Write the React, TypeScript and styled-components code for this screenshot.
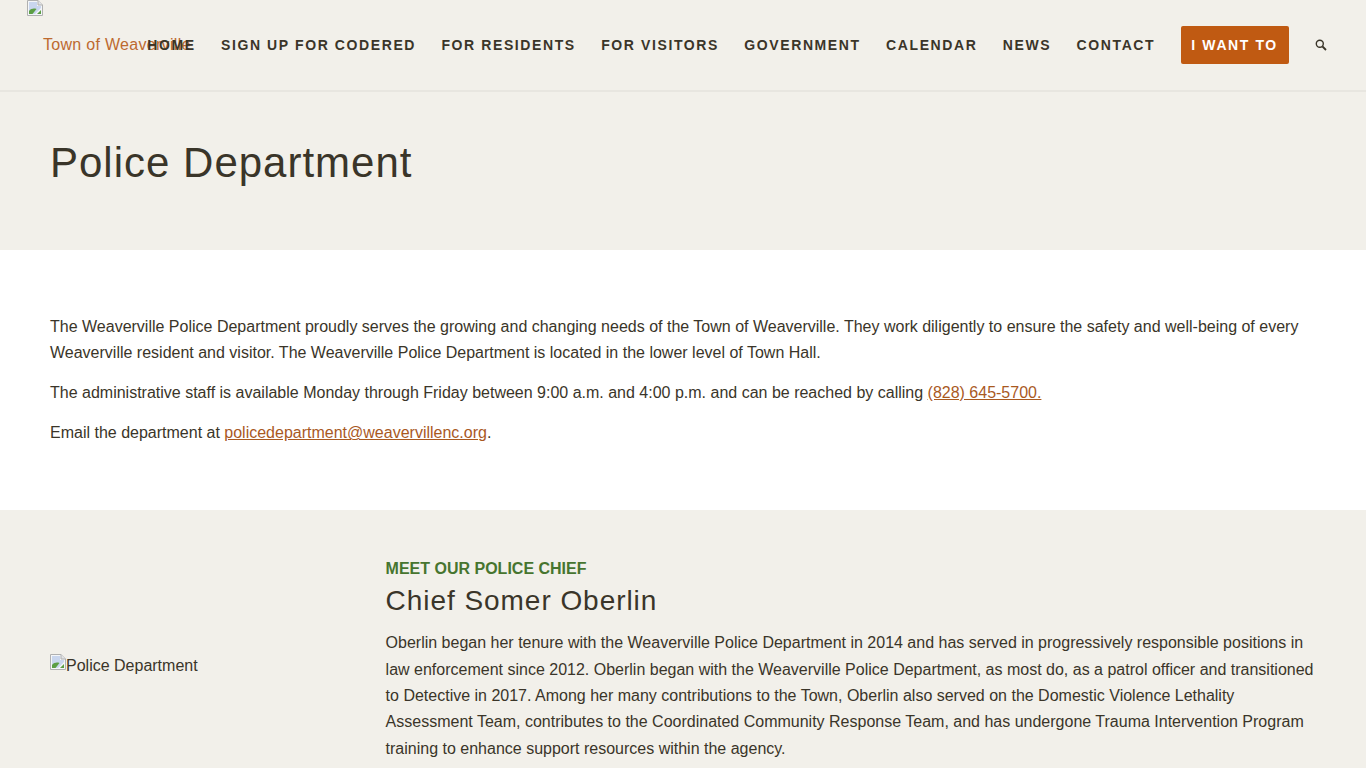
import React from 'react'
import styled, { createGlobalStyle } from 'styled-components'

const GlobalStyle = createGlobalStyle`
  html, body {
    margin: 0;
    padding: 0;
    height: 768px;
    overflow: hidden;
    background: #f2f0ea;
  }

  body {
    font-family: "Liberation Sans", Arial, sans-serif;
    font-size: 16px;
    color: #3a3529;
  }
`;

const Header = styled.header`
  position: relative;
  display: flex;
  align-items: center;
  justify-content: flex-end;
  height: 90px;
  padding-right: 39px;
  background: #f2f0ea;
  border-bottom: 2px solid #e8e6e0;
`;

const LogoLink = styled.a`
  position: absolute;
  left: 27px;
  top: 0;
  color: #bd6a30;
  font-size: 16px;
  line-height: 18px;
  text-decoration: none;

  span {
    position: absolute;
    left: 16px;
    top: 36px;
    letter-spacing: 0.3px;
    white-space: nowrap;
  }
`;

const BrokenIcon = styled.svg`
  display: block;
  width: 16px;
  height: 16px;
  flex: none;
`;

const Nav = styled.nav`
  position: relative;
  display: flex;
  align-items: center;
  gap: 25.4px;
`;

const NavLink = styled.a`
  color: #3a3529;
  font-size: 14px;
  font-weight: 700;
  letter-spacing: 1.6px;
  white-space: nowrap;
  text-decoration: none;
`;

const CtaButton = styled.a`
  display: flex;
  align-items: center;
  justify-content: center;
  width: 108px;
  height: 38px;
  background: #c05a12;
  border-radius: 2px;
  color: #fff;
  font-size: 14px;
  font-weight: 700;
  letter-spacing: 1.6px;
  white-space: nowrap;
  text-decoration: none;
`;

const SearchGlyph = styled.svg`
  display: block;
  margin-left: 1px;
`;

const TitleBand = styled.div`
  height: 158px;
  padding: 0 50px;
  display: flex;
  align-items: center;
  background: #f2f0ea;
`;

const PageTitle = styled.h1`
  margin: 0 0 16px;
  font-size: 42px;
  font-weight: 400;
  letter-spacing: 1px;
  line-height: 50px;
  color: #3a3529;
`;

const IntroSection = styled.section`
  height: 260px;
  box-sizing: border-box;
  padding: 63.6px 50px 0;
  background: #fff;
`;

const Paragraph = styled.p`
  margin: 0 0 13.8px;
  font-size: 16px;
  line-height: 26.4px;
  color: #3a3529;
`;

const TextLink = styled.a`
  color: #a9591f;
  text-decoration: underline;
`;

const ChiefSection = styled.section`
  display: grid;
  grid-template-columns: 335.6px 1fr;
  padding: 48px 50px 0;
  background: #f2f0ea;
`;

const PhotoColumn = styled.div`
  display: flex;
  align-items: flex-start;
  align-self: start;
  margin-top: 96px;
  font-size: 16px;
  line-height: 18px;
  color: #3a3529;

  span {
    margin-top: 3px;
  }
`;

const Eyebrow = styled.div`
  font-size: 16px;
  font-weight: 700;
  line-height: 22px;
  color: #47752f;
`;

const ChiefName = styled.h2`
  margin: 0 0 8.2px;
  font-size: 28px;
  font-weight: 400;
  letter-spacing: 0.95px;
  line-height: 42px;
  color: #3a3529;
`;

const BrokenImage = () => (
  <BrokenIcon viewBox="0 0 16 16" aria-hidden="true">
    <path d="M0.5 0.5H11L15.5 5V15.5H0.5Z" fill="#f4f6f8" stroke="#b0b0b0" />
    <path d="M11 0.5V5H15.5" fill="#e2e4e6" stroke="#b0b0b0" />
    <path d="M2 2H10V6H14V8L8 14H2Z" fill="#c9d6ee" />
    <path d="M2 11C4 8.5 7 8 9.5 9L5.5 14H2Z" fill="#5c9e45" />
    <path d="M10 14L14 10V14Z" fill="#5c9e45" />
  </BrokenIcon>
);

const SearchIcon = () => (
  <SearchGlyph width="12" height="12" viewBox="0 0 12 12" aria-hidden="true">
    <circle cx="4.8" cy="4.8" r="3.5" fill="none" stroke="#3a3529" strokeWidth="1.4" />
    <path d="M7.5 7.5L11 11" stroke="#3a3529" strokeWidth="1.8" />
  </SearchGlyph>
);

const navItems = [
  'HOME',
  'SIGN UP FOR CODERED',
  'FOR RESIDENTS',
  'FOR VISITORS',
  'GOVERNMENT',
  'CALENDAR',
  'NEWS',
  'CONTACT',
];

export default function App() {
  return (
    <>
      <GlobalStyle />
      <Header>
        <LogoLink href="#">
          <BrokenImage />
          <span>Town of Weaverville</span>
        </LogoLink>
        <Nav>
          {navItems.map((item) => (
            <NavLink href="#" key={item}>{item}</NavLink>
          ))}
          <CtaButton href="#">I WANT TO</CtaButton>
          <SearchIcon />
        </Nav>
      </Header>
      <TitleBand>
        <PageTitle>Police Department</PageTitle>
      </TitleBand>
      <IntroSection>
        <Paragraph>
          The Weaverville Police Department proudly serves the growing and changing needs of the Town of Weaverville. They work diligently to ensure the safety and well-being of every Weaverville resident and visitor. The Weaverville Police Department is located in the lower level of Town Hall.
        </Paragraph>
        <Paragraph>
          The administrative staff is available Monday through Friday between 9:00 a.m. and 4:00 p.m. and can be reached by calling <TextLink href="#">(828) 645-5700.</TextLink>
        </Paragraph>
        <Paragraph>
          Email the department at <TextLink href="#">policedepartment@weavervillenc.org</TextLink>.
        </Paragraph>
      </IntroSection>
      <ChiefSection>
        <PhotoColumn>
          <BrokenImage />
          <span>Police Department</span>
        </PhotoColumn>
        <div>
          <Eyebrow>MEET OUR POLICE CHIEF</Eyebrow>
          <ChiefName>Chief Somer Oberlin</ChiefName>
          <Paragraph>
            Oberlin began her tenure with the Weaverville Police Department in 2014 and has served in progressively responsible positions in law enforcement since 2012. Oberlin began with the Weaverville Police Department, as most do, as a patrol officer and transitioned to Detective in 2017. Among her many contributions to the Town, Oberlin also served on the Domestic Violence Lethality Assessment Team, contributes to the Coordinated Community Response Team, and has undergone Trauma Intervention Program training to enhance support resources within the agency.
          </Paragraph>
        </div>
      </ChiefSection>
    </>
  )
}
